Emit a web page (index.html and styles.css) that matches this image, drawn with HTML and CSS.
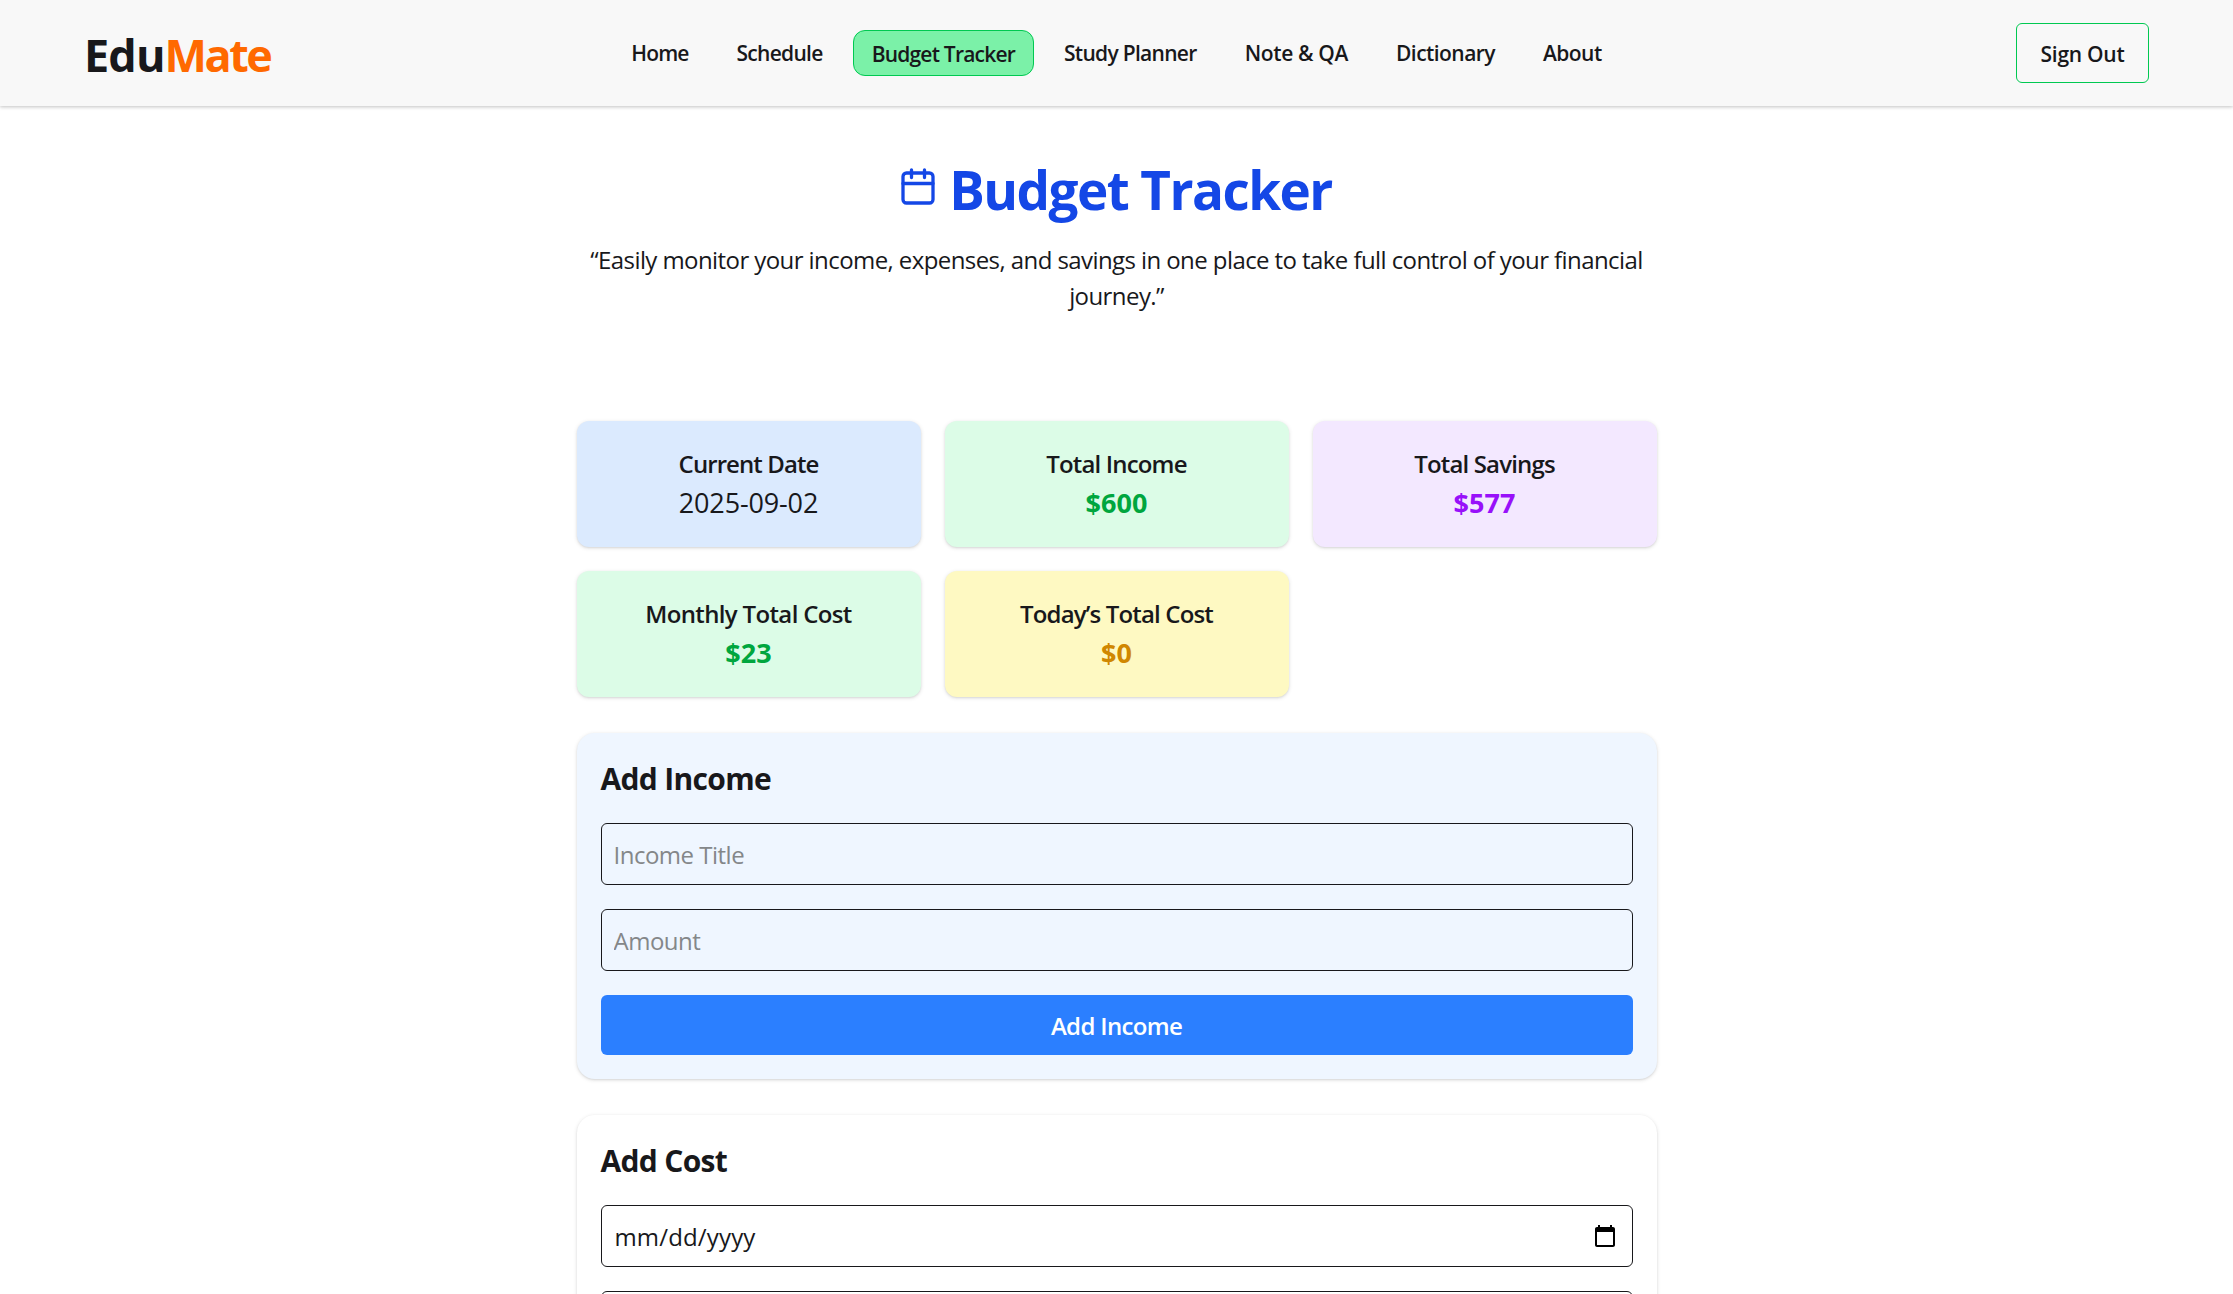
FILE: index.html
```html
<!DOCTYPE html>
<html lang="en">
<head>
<meta charset="utf-8">
<title>EduMate – Budget Tracker</title>
<link rel="stylesheet" href="styles.css">
</head>
<body>
<header class="header">
  <a class="logo"><span class="logo-edu">Edu</span><span class="logo-mate">Mate</span></a>
  <nav class="nav">
    <a class="link tight">Home</a>
    <a class="link snug">Schedule</a>
    <a class="link active">Budget Tracker</a>
    <a class="link snug">Study Planner</a>
    <a class="link loose">Note &amp; QA</a>
    <a class="link mid">Dictionary</a>
    <a class="link mid">About</a>
  </nav>
  <button class="signout">Sign Out</button>
</header>
<main class="main">
  <h1 class="title">
    <svg class="title-icon" width="34" height="38" viewBox="0 0 34 38" fill="none" stroke="currentColor" stroke-width="3.3" stroke-linecap="round"><rect x="2" y="5" width="30" height="30" rx="3.5"/><path d="M2 15.5h30M10.500 2v7.500M23.500 2v7.500"/></svg>
    <span>Budget Tracker</span>
  </h1>
  <p class="intro">“Easily monitor your income, expenses, and savings in one place to take full control of your financial<br>journey.”</p>
  <section class="cards">
    <div class="card blue"><h2 class="t-date">Current Date</h2><p class="date">2025-09-02</p></div>
    <div class="card green"><h2>Total Income</h2><p>$600</p></div>
    <div class="card purple"><h2>Total Savings</h2><p>$577</p></div>
    <div class="card green"><h2 class="t-month">Monthly Total Cost</h2><p>$23</p></div>
    <div class="card yellow"><h2>Today’s Total Cost</h2><p>$0</p></div>
  </section>
  <section class="panel income">
    <h2>Add Income</h2>
    <input class="field" type="text" placeholder="Income Title">
    <input class="field" type="text" placeholder="Amount">
    <button class="submit">Add Income</button>
  </section>
  <section class="panel">
    <h2>Add Cost</h2>
    <div class="field date-field"><span>mm/dd/yyyy</span>
      <svg width="24" height="24" viewBox="0 0 24 24"><path d="M20 3h-1V1h-2v2H7V1H5v2H4c-1.100 0-2 .9-2 2v16c0 1.100.9 2 2 2h16c1.100 0 2-.9 2-2V5c0-1.100-.9-2-2-2zm0 18H4V8h16v13z"/></svg>
    </div>
    <input class="field" type="text">
  </section>
</main>
</body>
</html>
```
FILE: styles.css
```css
* { box-sizing: border-box; margin: 0; padding: 0; }
html, body { height: 100%; overflow: hidden; }
body {
  display: flex;
  flex-direction: column;
  font-family: "Open Sans", "Noto Sans", sans-serif;
  font-size: 24px;
  line-height: 36px;
  color: #18181b;
  background: #fff;
}
.header {
  display: grid;
  flex: none;
  grid-template-columns: 1fr auto 1fr;
  align-items: center;
  height: 106px;
  padding: 0 84px;
  background: #f8f8f8;
  box-shadow: 0 1px 4px rgba(0, 0, 0, .15), 0 1px 3px rgba(0, 0, 0, .1);
}
.logo {
  font-size: 45px;
  font-weight: 700;
  line-height: 60px;
  padding-top: 4px;
}
.logo-edu { letter-spacing: -.9px; }
.logo-mate { color: #ff6900; letter-spacing: -2.5px; }
.nav { display: flex; align-items: center; gap: 12px; }
.link {
  font-size: 21px;
  font-weight: 600;
  line-height: 30px;
  padding: 0 18px 1px;
  white-space: nowrap;
}
.tight { letter-spacing: -.9px; }
.snug { letter-spacing: -.7px; }
.mid { letter-spacing: -.55px; }
.loose { letter-spacing: -.35px; }
.active {
  height: 46px;
  padding: 8px 18px 6px;
  letter-spacing: -.8px;
  background: #7bf1a8;
  border: 1px solid #00c951;
  border-radius: 12px;
}
.signout {
  justify-self: end;
  width: 133px;
  height: 60px;
  padding-top: 1px;
  font: 600 21px/30px "Open Sans", sans-serif;
  letter-spacing: -.25px;
  color: #18181b;
  background: none;
  border: 1px solid #00c951;
  border-radius: 6px;
}
.main {
  flex: 1;
  min-height: 0;
  width: 1088px;
  margin: 0 auto;
  padding: 53px 4px 0;
  overflow: hidden;
}
.title {
  display: flex;
  justify-content: center;
  gap: 14px;
  font-size: 53px;
  line-height: 60px;
  letter-spacing: -1.55px;
  color: #1447e6;
}
.title-icon { margin-top: 9px; }
.title span { padding-top: 1px; }
.intro { margin-top: 22px; text-align: center; letter-spacing: -.58px; white-space: nowrap; }
.cards {
  display: grid;
  grid-template-columns: repeat(3, 1fr);
  gap: 24px;
  margin-top: 107px;
}
.card {
  padding: 25px 24px 23px;
  text-align: center;
  border-radius: 12px;
  box-shadow: 0 1px 4px rgba(0, 0, 0, .12), 0 1px 2px rgba(0, 0, 0, .08);
}
.card h2 { font-size: 24px; font-weight: 600; line-height: 36px; letter-spacing: -.84px; }
.card .t-month { letter-spacing: -.65px; }
.card .t-date { letter-spacing: -.92px; }
.card p { font-size: 27px; font-weight: 700; line-height: 42px; }
.card .date { font-weight: 400; letter-spacing: -.15px; }
.blue { background: #dbeafe; }
.green { background: #dcfce7; }
.green p { color: #00a63e; }
.purple { background: #f3e8ff; }
.purple p { color: #9810fa; }
.yellow { background: #fef9c2; }
.yellow p { color: #d08700; }
.panel {
  display: flex;
  flex-direction: column;
  gap: 24px;
  margin-top: 36px;
  padding: 24px;
  border-radius: 18px;
  box-shadow: 0 1px 4px rgba(0, 0, 0, .12), 0 1px 2px rgba(0, 0, 0, .08);
}
.panel h2 { height: 42px; padding-top: 1px; font-size: 30px; line-height: 42px; letter-spacing: -.68px; }
.income { background: #eff6ff; }
.field {
  height: 62px;
  flex: none;
  padding: 1px 12px 0;
  font: 400 24px/36px "Open Sans", sans-serif;
  letter-spacing: -.5px;
  color: #18181b;
  background: transparent;
  border: 1px solid #18181b;
  border-radius: 6px;
}
.field::placeholder { color: #848789; }
.date-field {
  display: flex;
  align-items: center;
  justify-content: space-between;
  padding: 0 15px 0 13px;
  letter-spacing: .15px;
}
.date-field span { padding-top: 2px; }
.submit {
  height: 60px;
  padding-top: 1px;
  font: 600 24px/36px "Open Sans", sans-serif;
  letter-spacing: -.67px;
  color: #fff;
  background: #2b7fff;
  border: 0;
  border-radius: 6px;
}
```
